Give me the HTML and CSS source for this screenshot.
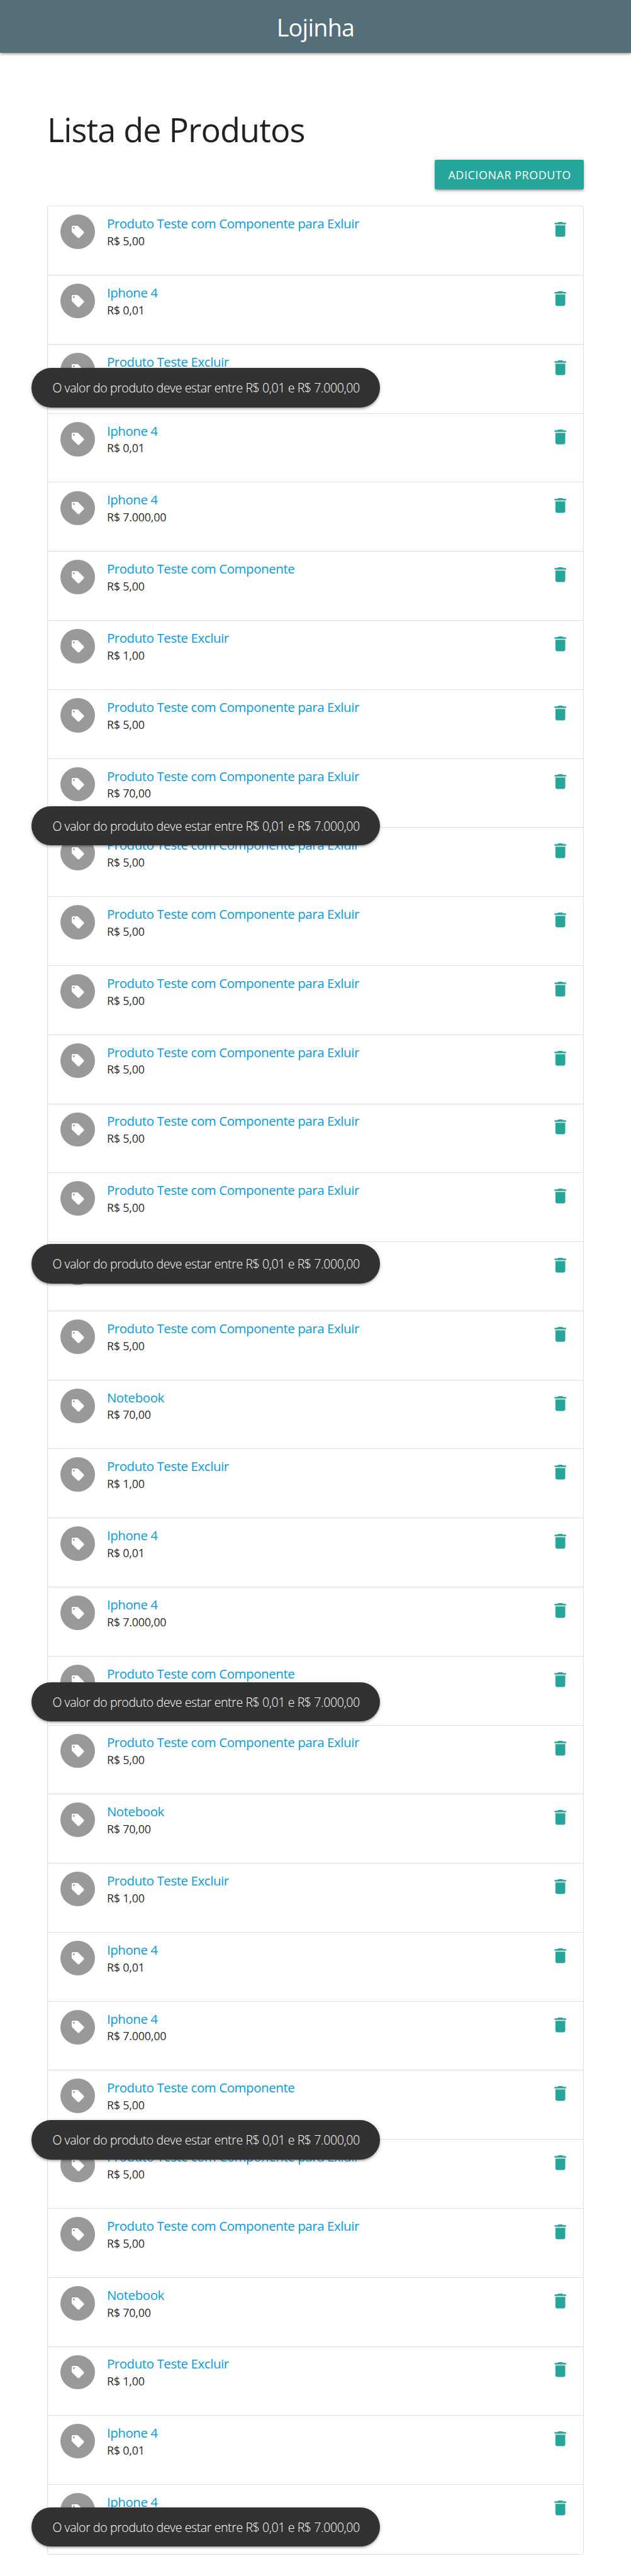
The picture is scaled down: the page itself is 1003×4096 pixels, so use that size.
FILE: index.html
```
<!DOCTYPE html>
<html lang="pt-BR">
<head>
<meta charset="utf-8">
<title>Lojinha</title>
<link rel="stylesheet" href="styles.css">
</head>
<body>
<svg class="sprite" aria-hidden="true">
<symbol id="tag" viewBox="0 0 24 24"><path d="M21.41 11.58l-9-9C12.05 2.22 11.55 2 11 2H4c-1.1 0-2 .9-2 2v7c0 .55.22 1.05.59 1.42l9 9c.36.36.86.58 1.41.58.55 0 1.05-.22 1.41-.59l7-7c.37-.36.59-.86.59-1.41 0-.55-.23-1.06-.59-1.42zM5.5 7C4.67 7 4 6.33 4 5.5S4.67 4 5.5 4 7 4.67 7 5.5 6.33 7 5.5 7z"/></symbol>
<symbol id="trash" viewBox="0 0 24 24"><path d="M6 19c0 1.1.9 2 2 2h8c1.1 0 2-.9 2-2V7H6v12zM19 4h-3.5l-1-1h-5l-1 1H5v2h14V4z"/></symbol>
</svg>
<nav class="navbar"><a class="brand">Lojinha</a></nav>
<main class="container">
<h2 class="heading">Lista de Produtos</h2>
<div class="actions"><a class="btn">ADICIONAR PRODUTO</a></div>
<ul class="collection">
<li class="item"><span class="avatar"><svg><use href="#tag"/></svg></span><div class="info"><a class="title">Produto Teste com Componente para Exluir</a><p class="price">R$ 5,00</p></div><svg class="remove"><use href="#trash"/></svg></li>
<li class="item"><span class="avatar"><svg><use href="#tag"/></svg></span><div class="info"><a class="title">Iphone 4</a><p class="price">R$ 0,01</p></div><svg class="remove"><use href="#trash"/></svg></li>
<li class="item"><span class="avatar"><svg><use href="#tag"/></svg></span><div class="info"><a class="title">Produto Teste Excluir</a></div><svg class="remove"><use href="#trash"/></svg></li>
<li class="item"><span class="avatar"><svg><use href="#tag"/></svg></span><div class="info"><a class="title">Iphone 4</a><p class="price">R$ 0,01</p></div><svg class="remove"><use href="#trash"/></svg></li>
<li class="item"><span class="avatar"><svg><use href="#tag"/></svg></span><div class="info"><a class="title">Iphone 4</a><p class="price">R$ 7.000,00</p></div><svg class="remove"><use href="#trash"/></svg></li>
<li class="item"><span class="avatar"><svg><use href="#tag"/></svg></span><div class="info"><a class="title">Produto Teste com Componente</a><p class="price">R$ 5,00</p></div><svg class="remove"><use href="#trash"/></svg></li>
<li class="item"><span class="avatar"><svg><use href="#tag"/></svg></span><div class="info"><a class="title">Produto Teste Excluir</a><p class="price">R$ 1,00</p></div><svg class="remove"><use href="#trash"/></svg></li>
<li class="item"><span class="avatar"><svg><use href="#tag"/></svg></span><div class="info"><a class="title">Produto Teste com Componente para Exluir</a><p class="price">R$ 5,00</p></div><svg class="remove"><use href="#trash"/></svg></li>
<li class="item"><span class="avatar"><svg><use href="#tag"/></svg></span><div class="info"><a class="title">Produto Teste com Componente para Exluir</a><p class="price">R$ 70,00</p></div><svg class="remove"><use href="#trash"/></svg></li>
<li class="item"><span class="avatar"><svg><use href="#tag"/></svg></span><div class="info"><a class="title">Produto Teste com Componente para Exluir</a><p class="price">R$ 5,00</p></div><svg class="remove"><use href="#trash"/></svg></li>
<li class="item"><span class="avatar"><svg><use href="#tag"/></svg></span><div class="info"><a class="title">Produto Teste com Componente para Exluir</a><p class="price">R$ 5,00</p></div><svg class="remove"><use href="#trash"/></svg></li>
<li class="item"><span class="avatar"><svg><use href="#tag"/></svg></span><div class="info"><a class="title">Produto Teste com Componente para Exluir</a><p class="price">R$ 5,00</p></div><svg class="remove"><use href="#trash"/></svg></li>
<li class="item"><span class="avatar"><svg><use href="#tag"/></svg></span><div class="info"><a class="title">Produto Teste com Componente para Exluir</a><p class="price">R$ 5,00</p></div><svg class="remove"><use href="#trash"/></svg></li>
<li class="item"><span class="avatar"><svg><use href="#tag"/></svg></span><div class="info"><a class="title">Produto Teste com Componente para Exluir</a><p class="price">R$ 5,00</p></div><svg class="remove"><use href="#trash"/></svg></li>
<li class="item"><span class="avatar"><svg><use href="#tag"/></svg></span><div class="info"><a class="title">Produto Teste com Componente para Exluir</a><p class="price">R$ 5,00</p></div><svg class="remove"><use href="#trash"/></svg></li>
<li class="item"><span class="avatar"><svg><use href="#tag"/></svg></span><div class="info"></div><svg class="remove"><use href="#trash"/></svg></li>
<li class="item"><span class="avatar"><svg><use href="#tag"/></svg></span><div class="info"><a class="title">Produto Teste com Componente para Exluir</a><p class="price">R$ 5,00</p></div><svg class="remove"><use href="#trash"/></svg></li>
<li class="item"><span class="avatar"><svg><use href="#tag"/></svg></span><div class="info"><a class="title">Notebook</a><p class="price">R$ 70,00</p></div><svg class="remove"><use href="#trash"/></svg></li>
<li class="item"><span class="avatar"><svg><use href="#tag"/></svg></span><div class="info"><a class="title">Produto Teste Excluir</a><p class="price">R$ 1,00</p></div><svg class="remove"><use href="#trash"/></svg></li>
<li class="item"><span class="avatar"><svg><use href="#tag"/></svg></span><div class="info"><a class="title">Iphone 4</a><p class="price">R$ 0,01</p></div><svg class="remove"><use href="#trash"/></svg></li>
<li class="item"><span class="avatar"><svg><use href="#tag"/></svg></span><div class="info"><a class="title">Iphone 4</a><p class="price">R$ 7.000,00</p></div><svg class="remove"><use href="#trash"/></svg></li>
<li class="item"><span class="avatar"><svg><use href="#tag"/></svg></span><div class="info"><a class="title">Produto Teste com Componente</a></div><svg class="remove"><use href="#trash"/></svg></li>
<li class="item"><span class="avatar"><svg><use href="#tag"/></svg></span><div class="info"><a class="title">Produto Teste com Componente para Exluir</a><p class="price">R$ 5,00</p></div><svg class="remove"><use href="#trash"/></svg></li>
<li class="item"><span class="avatar"><svg><use href="#tag"/></svg></span><div class="info"><a class="title">Notebook</a><p class="price">R$ 70,00</p></div><svg class="remove"><use href="#trash"/></svg></li>
<li class="item"><span class="avatar"><svg><use href="#tag"/></svg></span><div class="info"><a class="title">Produto Teste Excluir</a><p class="price">R$ 1,00</p></div><svg class="remove"><use href="#trash"/></svg></li>
<li class="item"><span class="avatar"><svg><use href="#tag"/></svg></span><div class="info"><a class="title">Iphone 4</a><p class="price">R$ 0,01</p></div><svg class="remove"><use href="#trash"/></svg></li>
<li class="item"><span class="avatar"><svg><use href="#tag"/></svg></span><div class="info"><a class="title">Iphone 4</a><p class="price">R$ 7.000,00</p></div><svg class="remove"><use href="#trash"/></svg></li>
<li class="item"><span class="avatar"><svg><use href="#tag"/></svg></span><div class="info"><a class="title">Produto Teste com Componente</a><p class="price">R$ 5,00</p></div><svg class="remove"><use href="#trash"/></svg></li>
<li class="item"><span class="avatar"><svg><use href="#tag"/></svg></span><div class="info"><a class="title">Produto Teste com Componente para Exluir</a><p class="price">R$ 5,00</p></div><svg class="remove"><use href="#trash"/></svg></li>
<li class="item"><span class="avatar"><svg><use href="#tag"/></svg></span><div class="info"><a class="title">Produto Teste com Componente para Exluir</a><p class="price">R$ 5,00</p></div><svg class="remove"><use href="#trash"/></svg></li>
<li class="item"><span class="avatar"><svg><use href="#tag"/></svg></span><div class="info"><a class="title">Notebook</a><p class="price">R$ 70,00</p></div><svg class="remove"><use href="#trash"/></svg></li>
<li class="item"><span class="avatar"><svg><use href="#tag"/></svg></span><div class="info"><a class="title">Produto Teste Excluir</a><p class="price">R$ 1,00</p></div><svg class="remove"><use href="#trash"/></svg></li>
<li class="item"><span class="avatar"><svg><use href="#tag"/></svg></span><div class="info"><a class="title">Iphone 4</a><p class="price">R$ 0,01</p></div><svg class="remove"><use href="#trash"/></svg></li>
<li class="item"><span class="avatar"><svg><use href="#tag"/></svg></span><div class="info"><a class="title">Iphone 4</a></div><svg class="remove"><use href="#trash"/></svg></li>
</ul>
</main>
<div class="toast toast-1">O valor do produto deve estar entre R$ 0,01 e R$ 7.000,00</div>
<div class="toast toast-2">O valor do produto deve estar entre R$ 0,01 e R$ 7.000,00</div>
<div class="toast toast-3">O valor do produto deve estar entre R$ 0,01 e R$ 7.000,00</div>
<div class="toast toast-4">O valor do produto deve estar entre R$ 0,01 e R$ 7.000,00</div>
<div class="toast toast-5">O valor do produto deve estar entre R$ 0,01 e R$ 7.000,00</div>
<div class="toast toast-6">O valor do produto deve estar entre R$ 0,01 e R$ 7.000,00</div>
</body>
</html>
```
FILE: styles.css
```
html {
  font-size: 8.7067px;
}

* {
  box-sizing: border-box;
}

body {
  position: relative;
  margin: 0;
  height: 4096px;
  overflow: hidden;
  background: #fff;
  color: rgba(0, 0, 0, 0.87);
  font-family: "Open Sans", "Noto Sans", sans-serif;
}

.sprite {
  display: none;
}

.navbar,
.btn,
.toast {
  box-shadow: 0 0.3rem 0.3rem 0 rgba(0, 0, 0, 0.14),
    0 0.45rem 0.15rem -0.3rem rgba(0, 0, 0, 0.12),
    0 0.15rem 0.75rem 0 rgba(0, 0, 0, 0.2);
}

.navbar {
  height: 9.6rem;
  background: #546e7a;
  color: #fff;
  text-align: center;
}

.brand {
  font-size: 4.32rem;
  line-height: 10.04rem;
  letter-spacing: -0.075rem;
}

.container {
  width: 98rem;
  margin: 0 auto;
}

.heading {
  margin: 10.77rem 0 2.23rem 0;
  font-size: 6rem;
  font-weight: 400;
  line-height: 6.6rem;
  letter-spacing: -0.1rem;
}

.actions {
  display: flex;
  justify-content: flex-end;
}

.btn {
  width: 27.2rem;
  height: 5.4rem;
  padding-left: 2.43rem;
  border-radius: 0.3rem;
  background: #26a69a;
  color: #fff;
  font-size: 2.06rem;
  line-height: 5.7rem;
  letter-spacing: 0.065rem;
  white-space: nowrap;
}

.collection {
  margin: 3rem 0 0;
  padding: 0;
  border: 1px solid #e0e0e0;
  border-radius: 0.3rem;
  list-style: none;
}

.item {
  display: flex;
  align-items: flex-start;
  height: 12.609rem;
  padding: 1.5rem 2.4rem 0 2.3rem;
  border-bottom: 1px solid #e0e0e0;
}

.item:last-child {
  border-bottom: 0;
}

.avatar {
  display: flex;
  flex: none;
  align-items: center;
  justify-content: center;
  width: 6.3rem;
  height: 6.3rem;
  border-radius: 50%;
  background: #999;
}

.avatar svg {
  width: 2.7rem;
  height: 2.7rem;
  fill: #fff;
}

.info {
  flex: 1;
  padding: 0.1rem 0 0 2.2rem;
  white-space: nowrap;
}

.title {
  display: block;
  color: #039be5;
  font-size: 2.35rem;
  line-height: 3.2rem;
  letter-spacing: -0.048rem;
}

.price {
  margin: 0;
  font-size: 2.06rem;
  line-height: 3.2rem;
  letter-spacing: -0.025rem;
}

.remove {
  flex: none;
  width: 3.6rem;
  height: 3.6rem;
  margin-top: 0.9rem;
  fill: #26a69a;
}

.toast {
  position: absolute;
  left: 5.76rem;
  width: 63.64rem;
  height: 7.2rem;
  padding-left: 3.82rem;
  border-radius: 3.6rem;
  background: #323232;
  color: #fff;
  font-size: 2.24rem;
  font-weight: 300;
  line-height: 7.4rem;
  letter-spacing: -0.045rem;
  white-space: nowrap;
}

.toast-1 { top: 67.2rem; }
.toast-2 { top: 147.2rem; }
.toast-3 { top: 227.2rem; }
.toast-4 { top: 307.2rem; }
.toast-5 { top: 387.2rem; }
.toast-6 { top: 457.9rem; }
```
